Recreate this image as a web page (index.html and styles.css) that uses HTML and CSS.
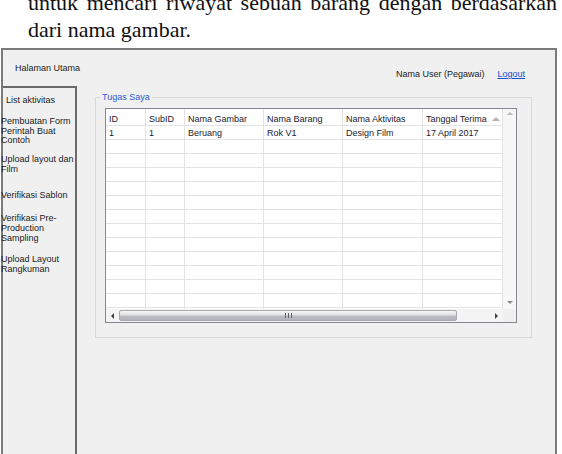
FILE: index.html
```html
<!DOCTYPE html>
<html lang="id">
<head>
    <meta charset="UTF-8">
    <meta name="viewport" content="width=device-width, initial-scale=1.0">
    <title>Halaman Utama</title>
    <link rel="stylesheet" href="styles.css">
</head>
<body>
    <div class="doc">
        <p class="line justify">untuk mencari riwayat sebuah barang dengan berdasarkan</p>
        <p class="line">dari nama gambar.</p>
    </div>

    <div class="frame">
        <div class="topbar">
            <span class="title">Halaman Utama</span>
            <div class="user">
                <span>Nama User (Pegawai)</span>
                <a href="#" class="logout">Logout</a>
            </div>
        </div>

        <div class="body">
            <div class="sidebar">
                <div class="side-title">List aktivitas</div>
                <a href="#" class="side-link">Pembuatan Form<br>Perintah Buat<br>Contoh</a>
                <a href="#" class="side-link gap-sm">Upload layout dan<br>Film</a>
                <a href="#" class="side-link gap-lg">Verifikasi Sablon</a>
                <a href="#" class="side-link gap-md">Verifikasi Pre-<br>Production<br>Sampling</a>
                <a href="#" class="side-link">Upload Layout<br>Rangkuman</a>
            </div>

            <div class="main">
                <fieldset class="group">
                    <legend>Tugas Saya</legend>
                    <div class="grid">
                        <div class="cells">
                            <table>
                                <colgroup>
                                    <col style="width:40px">
                                    <col style="width:39px">
                                    <col style="width:79px">
                                    <col style="width:79px">
                                    <col style="width:80px">
                                    <col style="width:80px">
                                </colgroup>
                                <thead>
                                    <tr>
                                        <th>ID</th>
                                        <th>SubID</th>
                                        <th>Nama Gambar</th>
                                        <th>Nama Barang</th>
                                        <th>Nama Aktivitas</th>
                                        <th><span class="sort-head">Tanggal Terima<span class="sort"></span></span></th>
                                    </tr>
                                </thead>
                                <tbody id="rows">
                                    <tr>
                                        <td>1</td>
                                        <td>1</td>
                                        <td>Beruang</td>
                                        <td>Rok V1</td>
                                        <td>Design Film</td>
                                        <td>17 April 2017</td>
                                    </tr>
                                </tbody>
                            </table>
                        </div>
                        <div class="vscroll">
                            <span class="arrow up"></span>
                            <span class="arrow down"></span>
                        </div>
                        <div class="hscroll">
                            <span class="btn"><span class="arrow left"></span></span>
                            <span class="thumb"><span class="grip"></span></span>
                            <span class="btn end"><span class="arrow right"></span></span>
                        </div>
                        <div class="corner"></div>
                    </div>
                </fieldset>
            </div>
        </div>
    </div>

    <script>
        // fill the grid with empty rows like the DataGridView does
        const rows = document.getElementById('rows');
        for (let i = 0; i < 13; i++) {
            const tr = document.createElement('tr');
            for (let c = 0; c < 6; c++) {
                tr.appendChild(document.createElement('td'));
            }
            rows.appendChild(tr);
        }
    </script>
</body>
</html>
```

FILE: styles.css
```css
body {
    margin: 0;
    background-color: #ffffff;
    font-family: "Liberation Sans", Arial, sans-serif;
    overflow: hidden;
}
.doc {
    margin-top: -11px;
    padding: 0 5px 0 28px;
    font-family: "Liberation Serif", "Times New Roman", serif;
    font-size: 22px;
    line-height: 27px;
    color: #111;
}
.line {
    margin: 0;
}
.justify {
    text-align: justify;
    text-align-last: justify;
}
.frame {
    margin: 5px 0 0 1px;
    width: 556px;
    height: 420px;
    box-sizing: border-box;
    border: 2px solid #7b7b7b;
    border-bottom: none;
    background-color: #f0f0f0;
    display: flex;
    flex-direction: column;
    font-size: 9px;
    color: #1a1a1a;
}
.topbar {
    height: 36px;
    display: flex;
    align-items: center;
    padding: 0 30px 0 12px;
}
.user {
    margin-left: auto;
    display: flex;
    gap: 13px;
    align-self: flex-end;
    padding-bottom: 7px;
}
.logout {
    color: #1748d0;
    text-decoration: underline;
}
.body {
    flex: 1;
    display: flex;
}
.sidebar {
    width: 74px;
    box-sizing: border-box;
    border-top: 2px solid #6b6b6b;
    border-right: 2px solid #6b6b6b;
    padding-top: 7px;
    display: flex;
    flex-direction: column;
    line-height: 9.7px;
}
.side-title {
    padding-left: 3px;
    line-height: 10px;
}
.side-link {
    margin: 12px 0 0 -2px;
    color: #1a1a1a;
    text-decoration: none;
}
.side-link.gap-sm {
    margin-top: 9px;
}
.side-link.gap-md {
    margin-top: 14px;
}
.side-link.gap-lg {
    margin-top: 16px;
}
.main {
    flex: 1;
    padding: 6px 0 0 18px;
}
.group {
    width: 437px;
    box-sizing: border-box;
    min-width: 0;
    margin: 0;
    padding: 5px 15px 14px 9px;
    border: 1px solid #d9d9d9;
}
.group legend {
    margin-left: -5px;
    padding: 0 2px;
    line-height: 11px;
    color: #2a5bd7;
}
.grid {
    width: 412px;
    height: 215px;
    box-sizing: border-box;
    border: 1px solid #828790;
    background-color: #ffffff;
    display: grid;
    grid-template-columns: 1fr 13px;
    grid-template-rows: 1fr 13px;
}
.cells {
    overflow: hidden;
}
table {
    width: 397px;
    table-layout: fixed;
    border-collapse: separate;
    border-spacing: 0;
}
th, td {
    padding: 0 0 0 3px;
    border-right: 1px solid #e3e3e3;
    border-bottom: 1px solid #e3e3e3;
    font-weight: normal;
    text-align: left;
    white-space: nowrap;
    overflow: hidden;
    color: #1b1b2f;
}
th {
    height: 17px;
    box-sizing: border-box;
    padding-top: 3px;
}
td {
    height: 14px;
    box-sizing: border-box;
}
.sort-head {
    display: flex;
    align-items: center;
    justify-content: space-between;
    padding-right: 2px;
}
.sort {
    width: 0;
    height: 0;
    border-left: 4px solid transparent;
    border-right: 4px solid transparent;
    border-bottom: 4px solid #b4b4b4;
}
.vscroll {
    background-color: #f7f7f7;
    display: flex;
    flex-direction: column;
    align-items: center;
    justify-content: space-between;
    padding: 3px 0 5px;
}
.arrow {
    width: 0;
    height: 0;
}
.arrow.up {
    border-left: 3px solid transparent;
    border-right: 3px solid transparent;
    border-bottom: 3px solid #b8b8b8;
}
.arrow.down {
    border-left: 3px solid transparent;
    border-right: 3px solid transparent;
    border-top: 3px solid #8a8a8a;
}
.arrow.left {
    border-top: 3px solid transparent;
    border-bottom: 3px solid transparent;
    border-right: 3px solid #404040;
}
.arrow.right {
    border-top: 3px solid transparent;
    border-bottom: 3px solid transparent;
    border-left: 3px solid #404040;
}
.hscroll {
    background-color: #f4f4f4;
    display: flex;
    align-items: center;
}
.btn {
    width: 13px;
    display: flex;
    justify-content: center;
}
.btn.end {
    margin-left: auto;
}
.thumb {
    width: 338px;
    height: 11px;
    box-sizing: border-box;
    border: 1px solid #a8a8ae;
    border-radius: 2px;
    background: linear-gradient(#f6f6f6, #e2e2e4 45%, #bcbcc4 55%, #b2b2ba);
    display: flex;
    align-items: center;
    justify-content: center;
}
.grip {
    width: 7px;
    height: 5px;
    background: repeating-linear-gradient(90deg, #606068 0 1px, transparent 1px 3px);
}
.corner {
    background-color: #f0f0f0;
}
```
